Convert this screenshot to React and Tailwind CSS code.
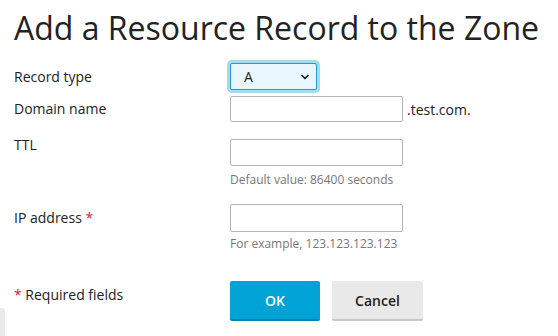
import { ChevronDown } from 'lucide-react';

export default function App() {
  return (
    <div className="relative h-[336px] w-[558px] overflow-hidden bg-white font-['Open_Sans',sans-serif] text-[#222]">
      <div className="pl-[14px] pt-[8px]">
        <h1 className="text-[32px] leading-[40px] font-normal text-[#222]">Add a Resource Record to the Zone</h1>

        <div className="mt-[15px] flex flex-col">
          {/* Record type */}
          <div className="flex items-center">
            <label className="w-[216px] text-[14px] leading-[20px]">Record type</label>
            <div className="flex h-[27px] w-[87px] items-center justify-between rounded-[2px] border border-[#1e9fd2] bg-[#eaf6fd] pl-[13px] pr-[5px] text-[14px] shadow-[0_0_0_3px_#a3dcef]">
              <span>A</span>
              <ChevronDown className="h-[12px] w-[12px] text-[#222]" strokeWidth={3.5} />
            </div>
          </div>

          {/* Domain name */}
          <div className="mt-[6px] flex items-center">
            <label className="w-[216px] text-[14px] leading-[20px]">Domain name</label>
            <input className="h-[26px] w-[173px] rounded-[2px] border border-[#b5b5b5] bg-white px-2 text-[14px] outline-none" />
            <span className="ml-[4px] text-[14px]">.test.com.</span>
          </div>

          {/* TTL */}
          <div className="mt-[17px] flex items-start">
            <label className="-mt-[4px] w-[216px] text-[14px] leading-[20px]">TTL</label>
            <div className="flex flex-col">
              <input className="h-[27px] w-[173px] rounded-[2px] border border-[#b5b5b5] bg-white px-2 text-[14px] outline-none" />
              <span className="mt-[6px] text-[12px] leading-[16px] text-[#777]">Default value: 86400 seconds</span>
            </div>
          </div>

          {/* IP address */}
          <div className="mt-[16px] flex items-start">
            <label className="w-[216px] pt-[4px] text-[14px] leading-[20px]">
              IP address <span className="text-[#d0243c]">*</span>
            </label>
            <div className="flex flex-col">
              <input className="h-[28px] w-[173px] rounded-[2px] border border-[#b5b5b5] bg-white px-2 text-[14px] outline-none" />
              <span className="mt-[4px] text-[12px] leading-[16px] text-[#777]">For example, 123.123.123.123</span>
            </div>
          </div>

          {/* Footer */}
          <div className="mt-[29px] flex items-start">
            <div className="w-[216px] pt-[4px] text-[14px] leading-[20px]">
              <span className="text-[#d0243c]">*</span> Required fields
            </div>
            <div className="flex gap-[12px]">
              <button className="h-[40px] w-[90px] rounded-[2px] border-b-2 border-[#0085b3] bg-[#00a3d6] text-[14px] font-semibold text-white">
                OK
              </button>
              <button className="h-[40px] w-[91px] rounded-[2px] border-b-2 border-[#c8c8c8] bg-[#e9e9e9] text-[14px] font-semibold text-[#222]">
                Cancel
              </button>
            </div>
          </div>
        </div>
      </div>

      {/* stray panel edge bottom-left */}
      <div className="absolute bottom-0 left-0 h-[28px] w-[5px] rounded-tr-[3px] bg-[#ebebeb]" />
    </div>
  );
}
